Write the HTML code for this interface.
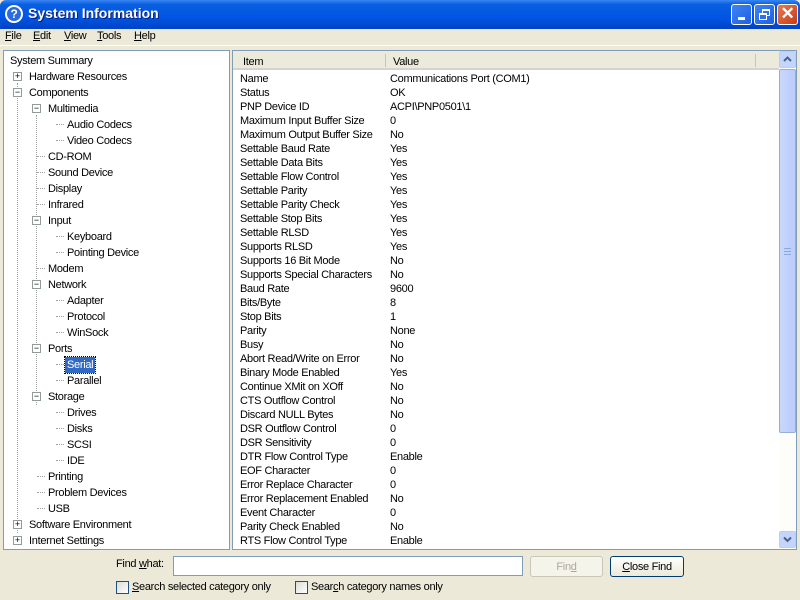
<!DOCTYPE html><html><head><style>
*{margin:0;padding:0;box-sizing:border-box}
body{width:800px;height:600px;overflow:hidden;background:#ece9d8;font-family:"Liberation Sans",sans-serif;font-size:11px;letter-spacing:-0.3px;color:#000;position:relative}
.a{position:absolute;white-space:nowrap}
.title{left:0;top:0;width:800px;height:29px;background:linear-gradient(#3a86f4,#0a5fe0 15%,#0055e5 60%,#0042c4);border-radius:6px 6px 0 0}
.tb{top:4px;width:21px;height:21px;border:1px solid #fff;border-radius:3px;background:linear-gradient(135deg,#3f84f5,#1e5fe0)}
.tr{height:16px;line-height:16px}
.box{width:9px;height:9px;border:1px solid #919b9c;background:#fff;font-size:9px;line-height:7px;text-align:center;color:#000;letter-spacing:0}
.rw{height:14px;line-height:14px}
.btn{border:1px solid #003c74;border-radius:3px;background:linear-gradient(#fff,#ece9d8);text-align:center;line-height:20px;height:21px}
.cb{width:13px;height:13px;border:1px solid #1c5180;background:linear-gradient(135deg,#dcdcd7,#fff)}
</style></head><body>
<div class="a title"></div>
<div class="a" style="left:5px;top:5px;width:18px;height:18px;border-radius:50%;background:#2b6be0;border:2px solid #fff;color:#fff;font-weight:bold;font-size:12px;line-height:14px;text-align:center">?</div>
<div class="a" style="left:28px;top:5px;color:#fff;font-weight:bold;font-size:14px;letter-spacing:0;text-shadow:1px 1px #0a1e78">System Information</div>
<div class="a tb" style="left:731px"><div class="a" style="left:6px;top:12px;width:7px;height:3px;background:#fff"></div></div>
<div class="a tb" style="left:754px"><div class="a" style="left:7px;top:4px;width:8px;height:7px;border:1px solid #fff;border-top-width:2px"></div><div class="a" style="left:4px;top:8px;width:8px;height:7px;border:1px solid #fff;border-top-width:2px;background:#2f70e8"></div></div>
<div class="a tb" style="left:777px;background:linear-gradient(135deg,#e87b55,#c83a14);color:#fff;font-size:17px;line-height:18px;text-align:center;font-weight:bold">✕</div>
<div class="a" style="left:5px;top:29px;line-height:14px"><u>F</u>ile</div>
<div class="a" style="left:33px;top:29px;line-height:14px"><u>E</u>dit</div>
<div class="a" style="left:64px;top:29px;line-height:14px"><u>V</u>iew</div>
<div class="a" style="left:97px;top:29px;line-height:14px"><u>T</u>ools</div>
<div class="a" style="left:134px;top:29px;line-height:14px"><u>H</u>elp</div>
<div class="a" style="left:0;top:45px;width:800px;height:1px;background:#fff"></div>
<!-- left pane -->
<div class="a" style="left:3px;top:50px;width:227px;height:500px;background:#fff;border:1px solid #7f9db9"></div>
<div class="a" style="left:17px;top:83px;height:450px;border-left:1px dotted #a0a0a0"></div>
<div class="a" style="left:36px;top:115px;height:290px;border-left:1px dotted #a0a0a0"></div>
<div id="tree"></div>
<!-- right pane -->
<div class="a" style="left:232px;top:50px;width:565px;height:500px;background:#fff;border:1px solid #7f9db9"></div>
<div class="a" style="left:233px;top:51px;width:546px;height:19px;background:#ebeadb;border-bottom:2px solid #d6d3ce"></div>
<div class="a" style="left:385px;top:54px;width:1px;height:13px;background:#c7c5b2"></div>
<div class="a" style="left:755px;top:54px;width:1px;height:13px;background:#c7c5b2"></div>
<div class="a" style="left:243px;top:55px;line-height:14px">Item</div>
<div class="a" style="left:393px;top:55px;line-height:14px">Value</div>
<div class="a" style="left:779px;top:51px;width:17px;height:498px;background:#fdfdfa"></div>
<div class="a" style="left:779px;top:51px;width:17px;height:17px;border:1px solid #b8cdf8;border-radius:2px;background:#c4d5fd"><svg class="a" style="left:3px;top:4px" width="9" height="7"><path d="M1 5L4.5 1.5L8 5" stroke="#4d6185" stroke-width="2" fill="none"/></svg></div>
<div class="a" style="left:779px;top:69px;width:17px;height:364px;border:1px solid #98acd8;border-radius:2px;background:linear-gradient(90deg,#c9d7fc,#b9ccfb)"></div>
<div class="a" style="left:784px;top:248px;width:7px;height:7px;border-top:1px solid #8ea6e0;border-bottom:1px solid #8ea6e0"></div>
<div class="a" style="left:784px;top:251px;width:7px;height:1px;background:#8ea6e0"></div>
<div class="a" style="left:779px;top:531px;width:17px;height:17px;border:1px solid #b8cdf8;border-radius:2px;background:#c4d5fd"><svg class="a" style="left:3px;top:4px" width="9" height="7"><path d="M1 1.5L4.5 5L8 1.5" stroke="#4d6185" stroke-width="2" fill="none"/></svg></div>
<div id="list"></div>
<!-- find bar -->
<div class="a" style="left:116px;top:558px">Find <u>w</u>hat:</div>
<div class="a" style="left:173px;top:556px;width:350px;height:20px;background:#fff;border:1px solid #7f9db9"></div>
<div class="a btn" style="left:530px;top:556px;width:73px;border-color:#c9c7ba;color:#aca899;background:#f5f4ea">Fin<u>d</u></div>
<div class="a btn" style="left:610px;top:556px;width:74px"><u>C</u>lose Find</div>
<div class="a cb" style="left:116px;top:581px"></div>
<div class="a" style="left:132px;top:581px"><u>S</u>earch selected category only</div>
<div class="a cb" style="left:295px;top:581px"></div>
<div class="a" style="left:311px;top:581px">Sear<u>c</u>h category names only</div>
<script>
var t=[[0,"System Summary"],[1,"Hardware Resources","+"],[1,"Components","−"],[2,"Multimedia","−"],[3,"Audio Codecs"],[3,"Video Codecs"],[2,"CD-ROM"],[2,"Sound Device"],[2,"Display"],[2,"Infrared"],[2,"Input","−"],[3,"Keyboard"],[3,"Pointing Device"],[2,"Modem"],[2,"Network","−"],[3,"Adapter"],[3,"Protocol"],[3,"WinSock"],[2,"Ports","−"],[3,"Serial"],[3,"Parallel"],[2,"Storage","−"],[3,"Drives"],[3,"Disks"],[3,"SCSI"],[3,"IDE"],[2,"Printing"],[2,"Problem Devices"],[2,"USB"],[1,"Software Environment","+"],[1,"Internet Settings","+"]];
var h="";t.forEach(function(r,i){var y=53+16*i,x=[10,29,48,67][r[0]];
if(r[2])h+='<div class="a box" style="left:'+(x-16)+'px;top:'+(y+3)+'px">'+(r[2]=="+"?"+":"−")+'</div>';
else if(r[0]>1)h+='<div class="a" style="left:'+(x-11)+'px;top:'+(y+7)+'px;width:8px;border-top:1px dotted #a0a0a0"></div>';
var s=r[1]=="Serial"?'background:#316ac5;color:#fff;outline:1px dotted #000;padding:0 2px;left:'+(x-2)+'px':'left:'+x+'px';
h+='<div class="a tr" style="top:'+y+'px;'+s+'">'+r[1]+'</div>';});
document.getElementById("tree").innerHTML=h;
var l=[["Name","Communications Port (COM1)"],["Status","OK"],["PNP Device ID","ACPI\\PNP0501\\1"],["Maximum Input Buffer Size","0"],["Maximum Output Buffer Size","No"],["Settable Baud Rate","Yes"],["Settable Data Bits","Yes"],["Settable Flow Control","Yes"],["Settable Parity","Yes"],["Settable Parity Check","Yes"],["Settable Stop Bits","Yes"],["Settable RLSD","Yes"],["Supports RLSD","Yes"],["Supports 16 Bit Mode","No"],["Supports Special Characters","No"],["Baud Rate","9600"],["Bits/Byte","8"],["Stop Bits","1"],["Parity","None"],["Busy","No"],["Abort Read/Write on Error","No"],["Binary Mode Enabled","Yes"],["Continue XMit on XOff","No"],["CTS Outflow Control","No"],["Discard NULL Bytes","No"],["DSR Outflow Control","0"],["DSR Sensitivity","0"],["DTR Flow Control Type","Enable"],["EOF Character","0"],["Error Replace Character","0"],["Error Replacement Enabled","No"],["Event Character","0"],["Parity Check Enabled","No"],["RTS Flow Control Type","Enable"]];
h="";l.forEach(function(r,i){var y=72+14*i;h+='<div class="a rw" style="left:240px;top:'+y+'px">'+r[0]+'</div><div class="a rw" style="left:390px;top:'+y+'px">'+r[1]+'</div>';});
document.getElementById("list").innerHTML=h;
</script>
</body></html>
